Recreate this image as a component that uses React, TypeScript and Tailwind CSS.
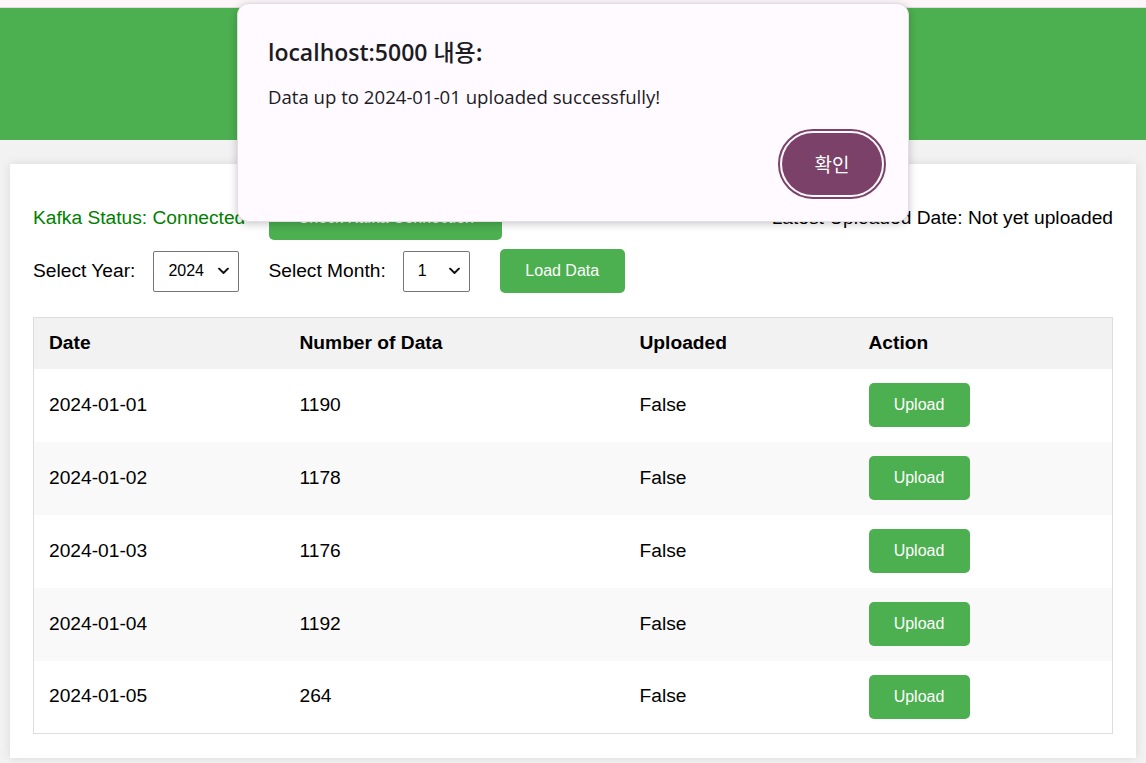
import { useState } from 'react'

interface DayRow {
  date: string
  count: number
  uploaded: boolean
}

const rows: DayRow[] = [
  { date: '2024-01-01', count: 1190, uploaded: false },
  { date: '2024-01-02', count: 1178, uploaded: false },
  { date: '2024-01-03', count: 1176, uploaded: false },
  { date: '2024-01-04', count: 1192, uploaded: false },
  { date: '2024-01-05', count: 264, uploaded: false },
]

const Chevron = () => (
  <svg width="11" height="7" viewBox="0 0 11 7" className="pointer-events-none absolute right-[9px] top-1/2 -translate-y-1/2">
    <path d="M1 1l4.5 4.5L10 1" fill="none" stroke="#111" strokeWidth="1.8" strokeLinecap="round" strokeLinejoin="round" />
  </svg>
)

const FakeSelect = ({ value, width }: { value: string; width: string }) => (
  <div className={`relative h-[41px] ${width} rounded-[2px] border border-[#767676] bg-white`}>
    <span className="absolute left-[14px] top-1/2 -translate-y-1/2 text-[16px] text-black">{value}</span>
    <Chevron />
  </div>
)

const GreenButton = ({ label, width }: { label: string; width: string }) => (
  <button className={`h-[44px] ${width} rounded-[5px] bg-[#4CAF50] text-[16px] text-white`}>{label}</button>
)

const AlertDialog = () => (
  <div className="absolute left-[237px] top-[3px] h-[219px] w-[672px] rounded-[12px] border border-[#e4dde3] bg-[#fefaff] shadow-[0_2px_8px_rgba(0,0,0,0.22)] [font-family:'Open_Sans','Noto_Sans_CJK_KR',sans-serif]">
    <div className="pl-[30px] pt-[30px] text-[23px] font-semibold leading-[34px] text-[#1c1b1f]">
      localhost:5000 <span className="[font-family:'Noto_Sans_CJK_KR',sans-serif] font-medium">내용:</span>
    </div>
    <div className="pl-[30px] pt-[15px] text-[18.6px] leading-[26px] text-[#1c1b1f]">
      Data up to 2024-01-01 uploaded successfully!
    </div>
    <div className="absolute right-[22px] top-[125px] rounded-full border-2 border-[#7b4168] p-[2px]">
      <button className="flex h-[62px] w-[100px] items-center justify-center rounded-full bg-[#7b4168] text-[19px] text-white [font-family:'Noto_Sans_CJK_KR',sans-serif]">
        확인
      </button>
    </div>
  </div>
)

export default function App() {
  const [year] = useState('2024')
  const [month] = useState('1')

  return (
    <div className="relative min-h-[763px] bg-[#f2f2f2] [font-family:'Liberation_Sans',Arial,sans-serif] text-black">
      <div className="h-[8px] border-b border-[#e6dadd] bg-[#fcf6f8]" />
      <header className="h-[132px] bg-[#4CAF50]" />

      <main className="px-[10px] pt-[24px]">
        <div className="bg-white px-[23px] pb-[24px] pt-[32px] shadow-[0_0_10px_rgba(0,0,0,0.1)]">
          <div className="flex h-[44px] items-center text-[19.2px]">
            <span className="text-[#008000]">Kafka Status: Connected</span>
            <div className="ml-[24px]">
              <GreenButton label="Check Kafka Connection" width="w-[233px]" />
            </div>
            <span className="ml-auto">Latest Uploaded Date: Not yet uploaded</span>
          </div>

          <div className="mt-[9px] flex h-[44px] items-center text-[19.2px]">
            <span>Select Year:</span>
            <div className="ml-[18px]">
              <FakeSelect value={year} width="w-[86px]" />
            </div>
            <span className="ml-[29px]">Select Month:</span>
            <div className="ml-[17px]">
              <FakeSelect value={month} width="w-[67px]" />
            </div>
            <div className="ml-[30px]">
              <GreenButton label="Load Data" width="w-[125px]" />
            </div>
          </div>

          <table className="mt-[24px] w-full table-fixed border-collapse border border-[#dddddd] text-[19.2px]">
            <thead>
              <tr className="h-[51px] bg-[#f2f2f2] text-left">
                <th className="w-[251px] pl-[15px] font-bold">Date</th>
                <th className="w-[340px] pl-[15px] font-bold">Number of Data</th>
                <th className="w-[229px] pl-[15px] font-bold">Uploaded</th>
                <th className="pl-[15px] font-bold">Action</th>
              </tr>
            </thead>
            <tbody>
              {rows.map((row, i) => (
                <tr key={row.date} className={`h-[73px] ${i % 2 === 1 ? 'bg-[#f9f9f9]' : 'bg-white'}`}>
                  <td className="pl-[15px]">{row.date}</td>
                  <td className="pl-[15px]">{row.count}</td>
                  <td className="pl-[15px]">{row.uploaded ? 'True' : 'False'}</td>
                  <td className="pl-[15px]">
                    <GreenButton label="Upload" width="w-[101px]" />
                  </td>
                </tr>
              ))}
            </tbody>
          </table>
        </div>
      </main>

      <AlertDialog />
    </div>
  )
}
